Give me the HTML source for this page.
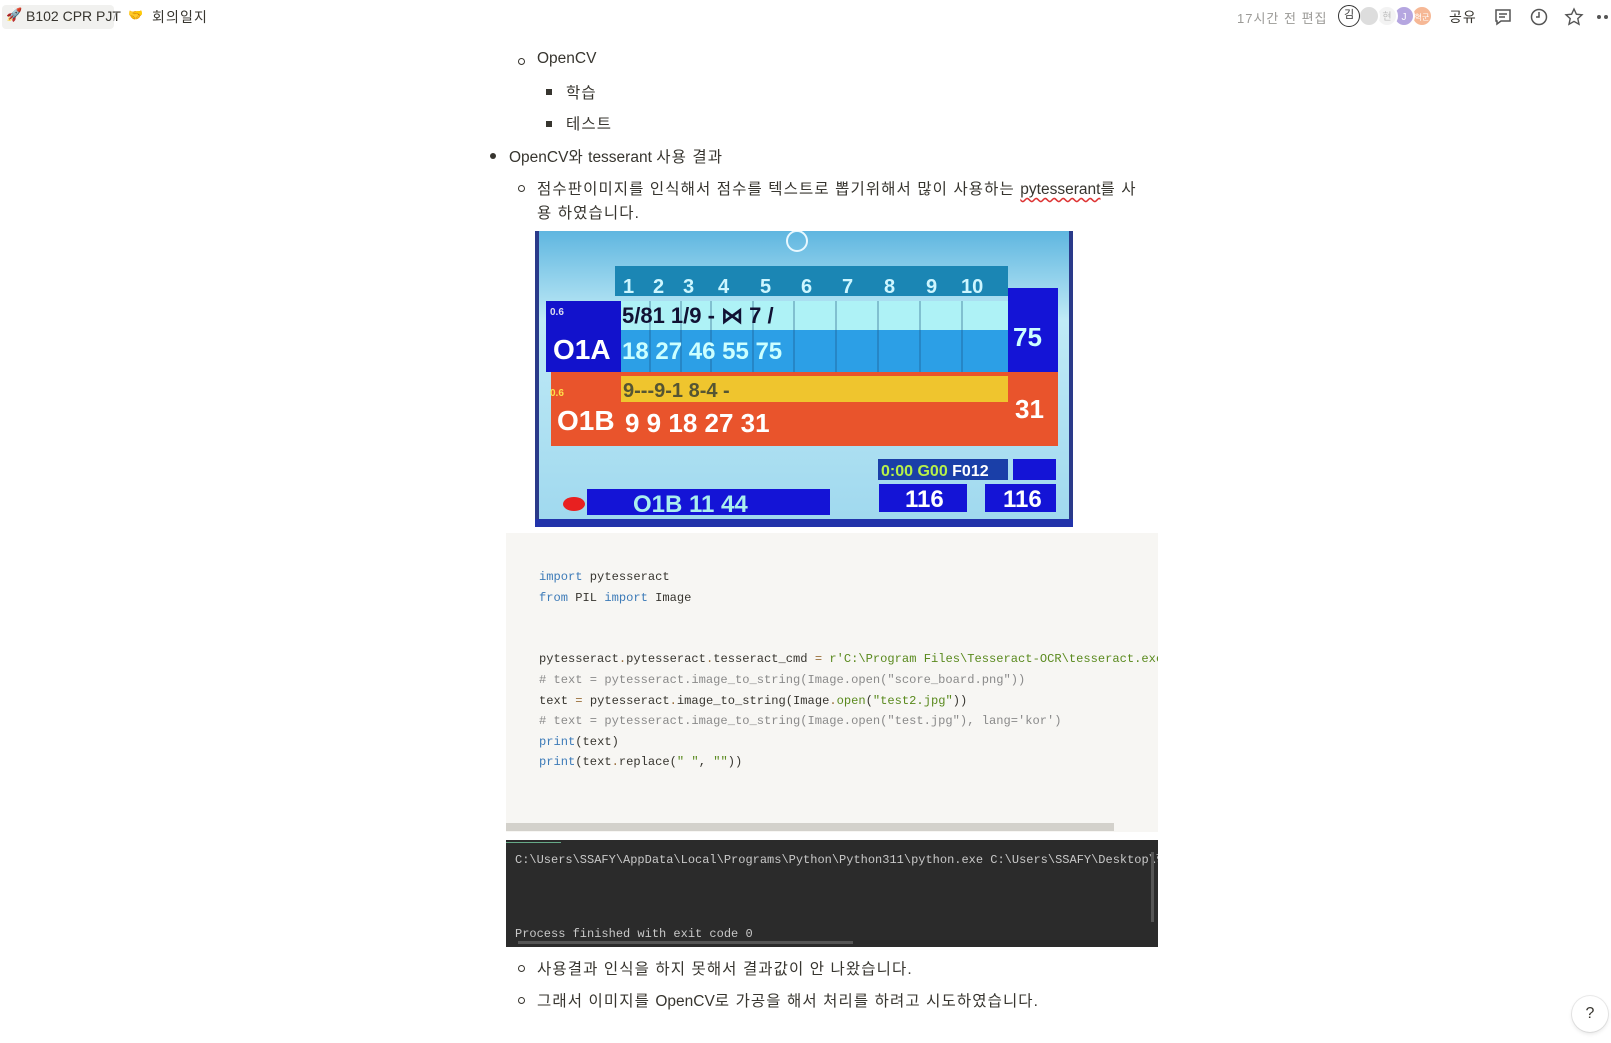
<!DOCTYPE html>
<html><head><meta charset="utf-8"><style>
*{margin:0;padding:0;box-sizing:border-box}
body{width:1611px;height:1043px;background:#fff;position:relative;overflow:hidden;font-family:"Liberation Sans","Noto Sans CJK KR",sans-serif;color:#37352f}
.a{position:absolute;white-space:nowrap}
.t{font-size:15.5px}
.k{letter-spacing:1.1px}
.code{font-family:"Liberation Mono","Noto Sans CJK KR",monospace;font-size:12.1px;color:#37352f}
.kw{color:#3d7bb8}.st{color:#5a8a1e}.cm{color:#8a8a8a}.op{color:#9a6e3a}
.av{position:absolute;top:5px;width:22px;height:22px;border-radius:50%;font-size:10px;text-align:center;line-height:22px;color:#fff}
</style></head><body>
<div class="a" style="left:2px;top:5px;width:112px;height:24px;background:#f1f1ef;border-radius:4px"></div>
<div class="a" style="left:6px;top:7px;font-size:13px">🚀</div>
<div class="a" style="left:26px;top:8px;font-size:14px">B102 CPR PJT</div>
<div class="a" style="left:113px;top:8px;font-size:14px;color:#aaa">/</div>
<div class="a" style="left:128px;top:8px;font-size:12px;color:#f2c230">🤝</div>
<div class="a k" style="left:152px;top:7px;font-size:14px">회의일지</div>

<div class="a" style="left:1237px;top:8px;font-size:13px;color:#9b9a97;letter-spacing:1px">17시간 전 편집</div>
<div class="av" style="left:1411px;background:#f6b896;border:2px solid #fff;font-size:8px">혁군</div>
<div class="av" style="left:1393px;background:#b5a6e0;border:2px solid #fff">J</div>
<div class="av" style="left:1376px;background:#f3f3f3;color:#bbb;border:2px solid #fff">현</div>
<div class="av" style="left:1358px;background:#ddd;border:2px solid #fff"></div>
<div class="av" style="left:1338px;background:#fff;border:1.5px solid #333;color:#333;font-size:11px;line-height:19px">김</div>
<div class="a" style="left:1449px;top:7px;font-size:14px;letter-spacing:1px">공유</div>
<svg class="a" style="left:1493px;top:7px" width="20" height="20" viewBox="0 0 20 20" fill="none" stroke="#555" stroke-width="1.5"><path d="M3 3h14v11H8l-4 3v-3H3z"/><path d="M6 7h8M6 10h6"/></svg>
<svg class="a" style="left:1529px;top:7px" width="20" height="20" viewBox="0 0 20 20" fill="none" stroke="#555" stroke-width="1.5"><circle cx="10" cy="10" r="7.5"/><path d="M10 5v5H7"/></svg>
<svg class="a" style="left:1564px;top:7px" width="20" height="20" viewBox="0 0 20 20" fill="none" stroke="#555" stroke-width="1.4"><path d="M10 2l2.4 5.2 5.6.6-4.2 3.8 1.2 5.6L10 14.4 5 17.2l1.2-5.6L2 7.8l5.6-.6z"/></svg>
<div class="a" style="left:1597px;top:15px;width:4px;height:4px;border-radius:50%;background:#555"></div>
<div class="a" style="left:1604px;top:15px;width:4px;height:4px;border-radius:50%;background:#555"></div>

<div class="a" style="left:518px;top:58px;width:7px;height:7px;border:1.3px solid #37352f;border-radius:50%"></div>
<div class="a t" style="left:537px;top:50px">OpenCV</div>
<div class="a" style="left:546px;top:89px;width:6px;height:6px;background:#37352f"></div>
<div class="a t k" style="left:566px;top:81px">학습</div>
<div class="a" style="left:546px;top:121px;width:6px;height:6px;background:#37352f"></div>
<div class="a t k" style="left:566px;top:112px">테스트</div>
<div class="a" style="left:490px;top:153px;width:6px;height:6px;border-radius:50%;background:#37352f"></div>
<div class="a t" style="left:509px;top:145px">OpenCV<span class="k">와</span> tesserant <span class="k">사용 결과</span></div>
<div class="a" style="left:518px;top:185px;width:7px;height:7px;border:1.3px solid #37352f;border-radius:50%"></div>
<div class="a t" style="left:537px;top:177px"><span class="k">점수판이미지를 인식해서 점수를 텍스트로 뽑기위해서 많이 사용하는 </span><span style="text-decoration:underline wavy #d33;text-underline-offset:3px">pytesserant</span><span class="k">를 사</span></div>
<div class="a t k" style="left:537px;top:201px">용 하였습니다.</div>

<svg class="a" style="left:535px;top:231px" width="538" height="296" viewBox="0 0 538 296">
<defs><linearGradient id="g" x1="0" y1="0" x2="0" y2="1"><stop offset="0" stop-color="#5fb6e0"/><stop offset=".3" stop-color="#bfeaf6"/><stop offset="1" stop-color="#9fd8ee"/></linearGradient></defs>
<rect width="538" height="296" fill="url(#g)"/>
<rect x="0" y="0" width="4" height="296" fill="#2a3a8a"/><rect x="534" y="0" width="4" height="296" fill="#2a3a8a"/>
<rect x="0" y="288" width="538" height="8" fill="#2233aa"/>
<circle cx="262" cy="10" r="10" fill="none" stroke="#e8f8ff" stroke-width="2"/>
<rect x="80" y="35" width="393" height="30" fill="#1b86b4"/>
<g fill="#cdf6ff" font-family="Liberation Sans Narrow,Liberation Sans,sans-serif" font-size="20" font-weight="bold">
<text x="88" y="62">1</text><text x="118" y="62">2</text><text x="148" y="62">3</text><text x="183" y="62">4</text><text x="225" y="62">5</text><text x="266" y="62">6</text><text x="307" y="62">7</text><text x="349" y="62">8</text><text x="391" y="62">9</text><text x="426" y="62">10</text></g>
<rect x="11" y="70" width="75" height="71" fill="#1212cc"/>
<rect x="86" y="70" width="387" height="29" fill="#aef2f6"/>
<rect x="86" y="99" width="387" height="42" fill="#2c9fe6"/>
<rect x="473" y="57" width="50" height="84" fill="#1414d6"/>
<rect x="16" y="141" width="507" height="74" fill="#e9542c"/>
<rect x="86" y="145" width="387" height="26" fill="#efc52e"/>
<g stroke="#1a4f7a" stroke-width="1" opacity=".6"><path d="M115 70v71M146 70v71M176 70v71M218 70v71M259 70v71M301 70v71M343 70v71M385 70v71M427 70v71"/></g>
<g font-family="Liberation Sans Narrow,Liberation Sans,sans-serif" font-weight="bold">
<text x="15" y="84" font-size="10" fill="#dde">0.6</text><text x="15" y="165" font-size="10" fill="#ffe04a">0.6</text>
<text x="18" y="128" font-size="28" fill="#fff">O1A</text><text x="22" y="199" font-size="28" fill="#fff">O1B</text>
<text x="87" y="92" font-size="22" fill="#113">5/81 1/9 -  ⋈  7 /</text>
<text x="87" y="128" font-size="24" fill="#cff">18 27 46  55  75</text>
<text x="478" y="115" font-size="26" fill="#cff">75</text>
<text x="88" y="166" font-size="20" fill="#553">9---9-1 8-4 -</text>
<text x="90" y="201" font-size="26" fill="#fff">9  9 18  27  31</text>
<text x="480" y="187" font-size="26" fill="#fff">31</text>
</g>
<rect x="343" y="228" width="130" height="21" fill="#1a3fa8"/><rect x="478" y="228" width="43" height="21" fill="#1414d6"/>
<text x="346" y="245" font-family="Liberation Sans Narrow,sans-serif" font-weight="bold" font-size="16" fill="#b6f04a">0:00 G00 <tspan fill="#fff">F012</tspan></text>
<rect x="344" y="253" width="88" height="28" fill="#1414d6"/><rect x="450" y="253" width="71" height="28" fill="#1414d6"/>
<text x="370" y="276" font-family="Liberation Sans,sans-serif" font-weight="bold" font-size="24" fill="#fff">116</text>
<text x="468" y="276" font-family="Liberation Sans,sans-serif" font-weight="bold" font-size="24" fill="#fff">116</text>
<rect x="52" y="258" width="243" height="26" fill="#1414d6"/>
<text x="98" y="281" font-family="Liberation Sans,sans-serif" font-weight="bold" font-size="24" fill="#aee">O1B  11  44</text>
<ellipse cx="39" cy="273" rx="11" ry="7" fill="#e82020"/>
</svg>

<div class="a" style="left:506px;top:533px;width:652px;height:299px;background:#f7f6f3"></div>
<div class="a" style="left:506px;top:823px;width:608px;height:8px;background:#d3d1cb"></div>
<div class="a code" style="left:539px;top:567px;line-height:20.6px;white-space:pre;width:619px;overflow:hidden"><span class="kw">import</span> pytesseract
<span class="kw">from</span> PIL <span class="kw">import</span> Image


pytesseract<span class="op">.</span>pytesseract<span class="op">.</span>tesseract_cmd <span class="op">=</span> <span class="st">r'C:\Program Files\Tesseract-OCR\tesseract.exe'</span>
<span class="cm"># text = pytesseract.image_to_string(Image.open("score_board.png"))</span>
text <span class="op">=</span> pytesseract<span class="op">.</span>image_to_string(Image<span class="op">.</span><span class="st">open</span>(<span class="st">"test2.jpg"</span>))
<span class="cm"># text = pytesseract.image_to_string(Image.open("test.jpg"), lang='kor')</span>
<span class="kw">print</span>(text)
<span class="kw">print</span>(text<span class="op">.</span>replace(<span class="st">" "</span>, <span class="st">""</span>))</div>

<div class="a" style="left:506px;top:840px;width:652px;height:107px;background:#2b2b2b;overflow:hidden">
<div class="a" style="left:0;top:0;width:55px;height:3px;border-bottom:1px solid #6a8"></div>
<div class="a code" style="left:9px;top:10px;color:#c8c8c8;font-size:12px">C:\Users\SSAFY\AppData\Local\Programs\Python\Python311\python.exe C:\Users\SSAFY\Desktop\학습</div>
<div class="a code" style="left:9px;top:87px;color:#c8c8c8;font-size:12px">Process finished with exit code 0</div>
<div class="a" style="left:12px;top:101px;width:335px;height:3px;background:#555"></div>
<div class="a" style="left:645px;top:12px;width:3px;height:70px;background:#555"></div>
</div>

<div class="a" style="left:518px;top:965px;width:7px;height:7px;border:1.3px solid #37352f;border-radius:50%"></div>
<div class="a t k" style="left:537px;top:957px">사용결과 인식을 하지 못해서 결과값이 안 나왔습니다.</div>
<div class="a" style="left:518px;top:997px;width:7px;height:7px;border:1.3px solid #37352f;border-radius:50%"></div>
<div class="a t" style="left:537px;top:989px"><span class="k">그래서 이미지를 </span>OpenCV<span class="k">로 가공을 해서 처리를 하려고 시도하였습니다.</span></div>

<div class="a" style="left:1572px;top:996px;width:36px;height:36px;border-radius:50%;background:#fff;box-shadow:0 0 0 1px rgba(0,0,0,.08),0 2px 4px rgba(0,0,0,.1);text-align:center;line-height:36px;font-size:16px;color:#37352f">?</div>
</body></html>
